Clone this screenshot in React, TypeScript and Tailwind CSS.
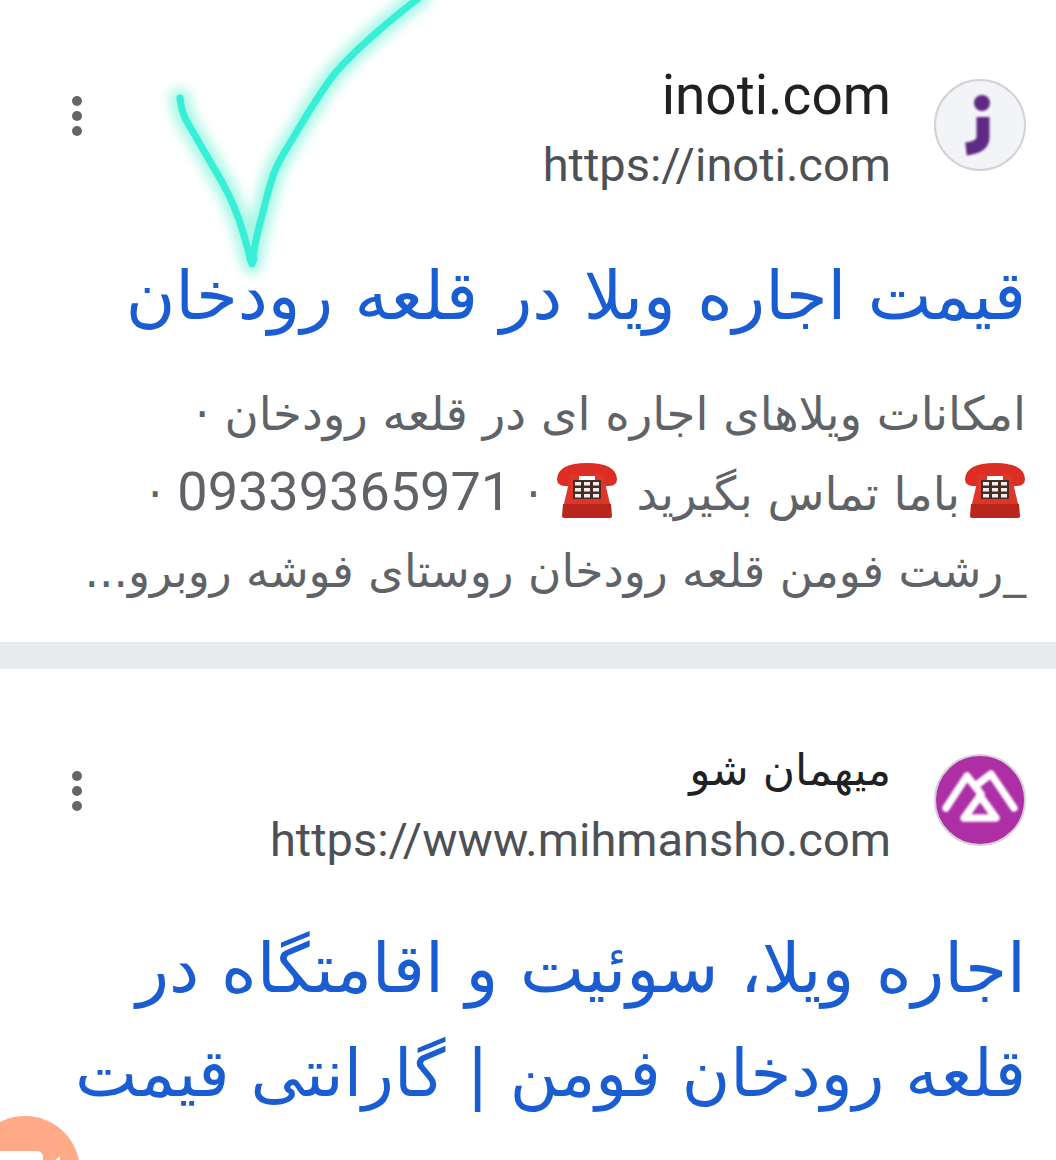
import React from 'react';

const LATIN = "font-['Roboto','Noto_Sans',sans-serif]";
const ARABIC = "font-['DejaVu_Sans','Noto_Sans',sans-serif]";

const CHECK_PATH = "M180 98 C181 106 182 112 186 120 L222 182 C232 200 238 215 243 232 L252 264 C254 246 258 230 263 212 C267 196 270 182 276 168 C281 157 287 148 293 138 C305 118 320 92 336 72 C352 54 372 34 420 -3";

const MenuDots = () => (
    <div className="flex flex-col gap-[5px] w-[10px] shrink-0">
        <span className="w-[10px] h-[10px] rounded-full bg-[#666666]" />
        <span className="w-[10px] h-[10px] rounded-full bg-[#666666]" />
        <span className="w-[10px] h-[10px] rounded-full bg-[#666666]" />
    </div>
);

const InotiLogo = () => (
    <div className="w-[92px] h-[92px] rounded-full bg-[#f3f4f7] border-2 border-[#d2d2d4] flex items-center justify-center shrink-0">
        <svg width="40" height="64" viewBox="0 0 40 64" className="blur-[1.2px]">
            <circle cx="22" cy="10" r="8" fill="#5f2a86" />
            <path d="M23 24 V44 Q23 54 6 56" fill="none" stroke="#5f2a86" strokeWidth="13" strokeLinejoin="round" />
        </svg>
    </div>
);

const MihmanshoLogo = () => (
    <div className="w-[92px] h-[92px] rounded-full bg-[#ae2ea6] border-2 border-[#d5d0d5] flex items-center justify-center shrink-0">
        <svg width="78" height="60" viewBox="0 0 78 60" className="blur-[0.8px]">
            <path
                d="M5 38 L26 6 L40 24 M37 14 L50 4 L73 38"
                fill="none"
                stroke="#ffffff"
                strokeWidth="7.5"
                strokeLinecap="round"
                strokeLinejoin="round"
            />
            <path d="M39 26 L55 48 H23 Z" fill="none" stroke="#ffffff" strokeWidth="7.5" strokeLinejoin="round" />
        </svg>
    </div>
);

// Red rotary desk telephone, used inline in the snippet
const Telephone = ({ className }: { className?: string }) => (
    <svg width="62" height="56" viewBox="0 0 62 56" className={`inline-block align-[-8px] ${className ?? ""}`}>
        <path d="M1 17 Q2 1 31 1 Q60 1 61 17 Q61 24 53 24 H47 V14 H15 V24 H9 Q1 24 1 17 Z" fill="#dd2e25" />
        <path d="M15 12 H23 V20 H39 V12 H47 L55 46 H7 Z" fill="#e0352b" />
        <path d="M7 42 H55 L56 54 Q56 56 53 56 H9 Q6 56 6 54 Z" fill="#b8261e" />
        <rect x="17" y="18" width="28" height="19" rx="1" fill="#4a2a25" />
        <g fill="#f3efee">
            <rect x="19" y="20" width="6" height="3.5" />
            <rect x="28" y="20" width="6" height="3.5" />
            <rect x="37" y="20" width="6" height="3.5" />
            <rect x="19" y="26" width="6" height="3.5" />
            <rect x="28" y="26" width="6" height="3.5" />
            <rect x="37" y="26" width="6" height="3.5" />
            <rect x="19" y="32" width="6" height="3.5" />
            <rect x="28" y="32" width="6" height="3.5" />
            <rect x="37" y="32" width="6" height="3.5" />
        </g>
    </svg>
);

const HandDrawnCheck = () => (
    <svg className="absolute left-0 top-0 pointer-events-none" width="460" height="300" viewBox="0 0 460 300">
        <defs>
            <filter id="glow" x="-20%" y="-20%" width="140%" height="140%">
                <feGaussianBlur stdDeviation="6" />
            </filter>
        </defs>
        <path
            d={CHECK_PATH}
            fill="none"
            stroke="#8ff5e0"
            strokeWidth="20"
            strokeLinecap="round"
            strokeLinejoin="round"
            filter="url(#glow)"
            opacity="0.8"
        />
        <path
            d={CHECK_PATH}
            fill="none"
            stroke="#36efd6"
            strokeWidth="7"
            strokeLinecap="round"
            strokeLinejoin="round"
        />
        <circle cx="252" cy="259" r="5.5" fill="#36efd6" />
    </svg>
);

// Floating video button, cut off by the corner of the screen
const VideoBubble = () => (
    <div className="absolute left-[-30px] top-[1116px] w-[110px] h-[110px] rounded-full bg-[#ffab87] overflow-hidden">
        <svg width="110" height="110" viewBox="0 0 110 110" className="absolute left-0 top-0">
            <rect x="24" y="35" width="49" height="36" rx="6" fill="#ffffff" />
            <path d="M78 50 L90 40 V66 L78 56 Z" fill="#ffffff" />
        </svg>
    </div>
);

type HeaderProps = {
    name: React.ReactNode;
    url: string;
    logo: React.ReactNode;
};

const ResultHeader: React.FC<HeaderProps> = ({ name, url, logo }) => (
    <div className="flex items-center justify-between pl-[72px] pr-[30px]">
        <div className="mb-[28px]">
            <MenuDots />
        </div>
        <div className="flex items-center gap-[43px]">
            <div className="flex flex-col items-end">
                {name}
                <div className={`${LATIN} text-[47px] leading-[70px] text-[#4d5156]`}>{url}</div>
            </div>
            <div className="mb-[10px]">{logo}</div>
        </div>
    </div>
);

export default function App() {
    return (
        <div className="relative w-[1056px] h-[1160px] overflow-hidden bg-white">
            <section className="h-[642px] pt-[60px]">
                <ResultHeader
                    name={<div className={`${LATIN} text-[55px] leading-[70px] text-[#202124]`}>inoti.com</div>}
                    url="https://inoti.com"
                    logo={<InotiLogo />}
                />
                <h3 dir="rtl" className={`${ARABIC} mt-[46px] pr-[30px] text-[67.6px] leading-[100px] font-normal text-[#1a5cd2] whitespace-nowrap`}>
                    قیمت اجاره ویلا در قلعه رودخان
                </h3>
                <div dir="rtl" className={`${ARABIC} mt-[29px] pr-[30px] text-[46.7px] leading-[78px] text-[#5f6368] whitespace-nowrap`}>
                    <div>امکانات ویلاهای اجاره ای در قلعه رودخان ·</div>
                    <div>
                        <Telephone className="ml-[4px]" />
                        باما تماس بگیرید <Telephone className="mr-[4px]" /> · <span className={`${LATIN} text-[54px]`}>09339365971</span> ·
                    </div>
                    <div className="text-[45.5px]">_رشت فومن قلعه رودخان روستای فوشه روبرو...</div>
                </div>
            </section>

            <div className="h-[27px] bg-[#e8eaed]" />

            <section className="pt-[66px]">
                <ResultHeader
                    name={<div dir="rtl" className={`${ARABIC} text-[44px] leading-[70px] text-[#202124]`}>میهمان شو</div>}
                    url="https://www.mihmansho.com"
                    logo={<MihmanshoLogo />}
                />
                <h3 dir="rtl" className={`${ARABIC} mt-[41px] pr-[30px] leading-[105px] font-normal text-[#1a5cd2] whitespace-nowrap`}>
                    <div className="text-[68px]">اجاره ویلا، سوئیت و اقامتگاه در</div>
                    <div className="text-[66px]">قلعه رودخان فومن | گارانتی قیمت</div>
                </h3>
            </section>

            <HandDrawnCheck />
            <VideoBubble />
        </div>
    );
}
